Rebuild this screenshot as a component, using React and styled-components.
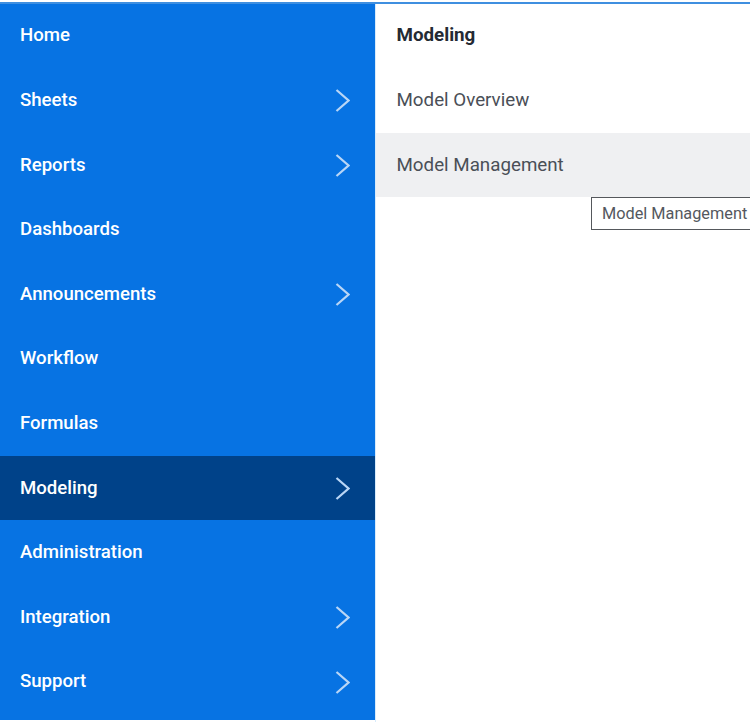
import React from 'react';
import styled, { createGlobalStyle } from 'styled-components';

const GlobalStyle = createGlobalStyle`
  html, body {
    margin: 0;
    padding: 0;
    background: #fff;
    overflow: hidden;
  }
  body {
    font-family: Roboto, "Liberation Sans", sans-serif;
  }
`;

const Page = styled.div`
  display: flex;
  width: 750px;
  height: 722px;
  box-sizing: border-box;
  padding-top: 3.6px;
  background: #fff;
  position: relative;
  overflow: hidden;
`;

const TopLine = styled.div`
  position: absolute;
  top: 2px;
  left: 0;
  right: 0;
  height: 2px;
  background: #3f8fe0;
`;

const Sidebar = styled.nav`
  display: flex;
  flex-direction: column;
  flex: 0 0 375px;
  height: 716.4px;
  background: #0773e3;
`;

const NavItem = styled.div`
  display: flex;
  flex: 0 0 64.6px;
  align-items: center;
  justify-content: space-between;
  padding: 0 25px 1px 20px;
  box-sizing: border-box;
  background: ${(p) => (p.$active ? '#004289' : 'transparent')};
  color: #fff;
  font-size: 18.6px;
  font-weight: 500;
`;

const Chevron = styled.svg`
  width: 15px;
  height: 24px;
  margin-top: 1px;
  fill: none;
  stroke: #b9d6f6;
  stroke-width: 2.2;
`;

const Panel = styled.section`
  position: relative;
  display: flex;
  flex-direction: column;
  flex: 1;
  border-left: 1px solid #d8ebfb;
`;

const PanelRow = styled.div`
  display: flex;
  flex: 0 0 64.6px;
  align-items: center;
  padding: 0 0 1px 20.5px;
  box-sizing: border-box;
  background: ${(p) => (p.$hover ? '#eff0f2' : 'transparent')};
  color: ${(p) => (p.$title ? '#242a33' : '#4a4f57')};
  font-size: 18.75px;
  font-weight: ${(p) => (p.$title ? 700 : 400)};
`;

const Tooltip = styled.div`
  position: absolute;
  top: 193.4px;
  left: 215px;
  width: 180px;
  height: 33px;
  box-sizing: border-box;
  display: flex;
  align-items: center;
  padding-left: 10px;
  background: #fff;
  border: 1px solid #55585c;
  color: #54585e;
  font-size: 16.3px;
  white-space: nowrap;
`;

const items = [
  { label: 'Home' },
  { label: 'Sheets', more: true },
  { label: 'Reports', more: true },
  { label: 'Dashboards' },
  { label: 'Announcements', more: true },
  { label: 'Workflow' },
  { label: 'Formulas' },
  { label: 'Modeling', more: true, active: true },
  { label: 'Administration' },
  { label: 'Integration', more: true },
  { label: 'Support', more: true },
];

const App = () => (
  <Page>
    <GlobalStyle />
    <TopLine />
    <Sidebar>
      {items.map((item) => (
        <NavItem key={item.label} $active={item.active}>
          {item.label}
          {item.more && (
            <Chevron viewBox="0 0 15 24">
              <path d="M1.5 2 L13.5 12.5 L1.5 23" />
            </Chevron>
          )}
        </NavItem>
      ))}
    </Sidebar>
    <Panel>
      <PanelRow $title>Modeling</PanelRow>
      <PanelRow>Model Overview</PanelRow>
      <PanelRow $hover>Model Management</PanelRow>
      <Tooltip>Model Management</Tooltip>
    </Panel>
  </Page>
);

export default App;
